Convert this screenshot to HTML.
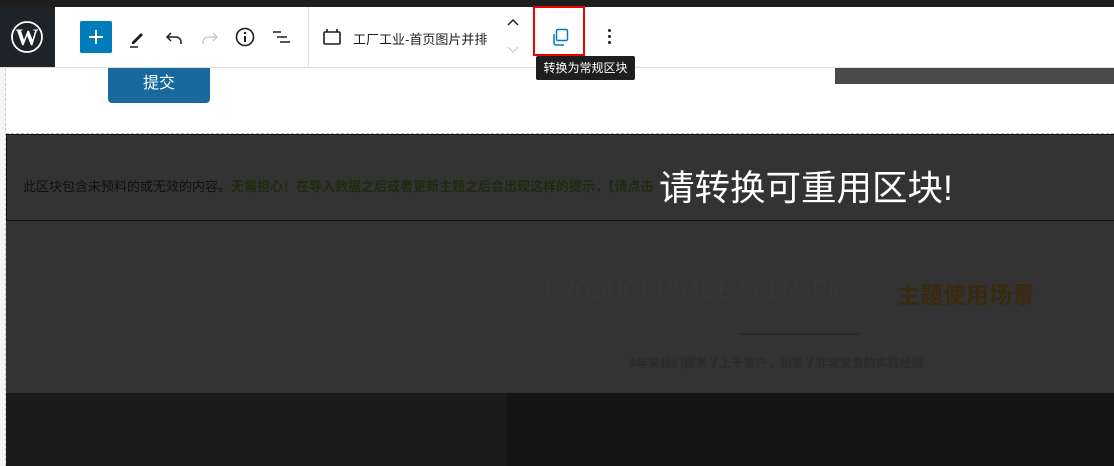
<!DOCTYPE html>
<html><head><meta charset="utf-8"><style>
*{margin:0;padding:0;box-sizing:border-box}
body{width:1114px;height:466px;overflow:hidden;background:#fff;position:relative;font-family:"Liberation Sans","Noto Sans CJK SC",sans-serif}
.a{position:absolute}
</style></head><body>
<div class="a" style="left:0;top:0;width:1114px;height:7px;background:#1e1e1e"></div>
<div class="a" style="left:0;top:7px;width:55px;height:60px;background:#1e2327"></div>
<svg class="a" style="left:10px;top:20px" width="34" height="34" viewBox="0 0 34 34"><circle cx="17" cy="17" r="15" fill="none" stroke="#fff" stroke-width="1.8"/><text x="17" y="25" text-anchor="middle" font-family="Liberation Serif,serif" font-weight="bold" font-size="23" fill="#fff">W</text></svg>
<div class="a" style="left:0;top:67px;width:1114px;height:1px;background:#ddd"></div>
<div class="a" style="left:308px;top:7px;width:1px;height:60px;background:#e0e0e0"></div>
<div class="a" style="left:80px;top:21px;width:32px;height:32px;background:#007cba;border-radius:2px"></div>
<svg class="a" style="left:80px;top:21px" width="32" height="32"><path d="M16 9v14M9 16h14" stroke="#fff" stroke-width="2"/></svg>
<svg class="a" style="left:126px;top:25px" width="24" height="24"><path d="M6 17l9-9 2 2-9 9H6z" fill="#1e1e1e"/><path d="M4 22h8" stroke="#1e1e1e" stroke-width="1.5"/></svg>
<svg class="a" style="left:162px;top:25px" width="24" height="24"><path d="M9 8L5 12l4 4M5 12h9a5 5 0 015 5v2" fill="none" stroke="#1e1e1e" stroke-width="1.5"/></svg>
<svg class="a" style="left:198px;top:25px" width="24" height="24"><path d="M15 8l4 4-4 4M19 12h-9a5 5 0 00-5 5v2" fill="none" stroke="#ccc" stroke-width="1.5"/></svg>
<svg class="a" style="left:233px;top:25px" width="24" height="24"><circle cx="12" cy="12" r="8.5" fill="none" stroke="#1e1e1e" stroke-width="1.6"/><path d="M12 11v6" stroke="#1e1e1e" stroke-width="2"/><circle cx="12" cy="8" r="1.2" fill="#1e1e1e"/></svg>
<svg class="a" style="left:270px;top:25px" width="24" height="24"><path d="M3 7h8M7 12h10M10 17h10" stroke="#1e1e1e" stroke-width="1.6"/></svg>
<svg class="a" style="left:322px;top:27px" width="22" height="20"><rect x="2" y="5" width="16" height="12" rx="1" fill="none" stroke="#1e1e1e" stroke-width="1.6"/><path d="M5 2v3M15 2v3" stroke="#1e1e1e" stroke-width="1.6"/></svg>
<div class="a" style="left:353px;top:29px;font-size:13px;color:#1e1e1e">工厂工业-首页图片并排</div>
<svg class="a" style="left:504px;top:16px" width="18" height="40"><path d="M4 9l5-5 5 5" fill="none" stroke="#1e1e1e" stroke-width="1.5"/><path d="M4 31l5 5 5-5" fill="none" stroke="#ccc" stroke-width="1.2"/></svg>
<div class="a" style="left:533px;top:6px;width:52px;height:50px;border:2px solid #e00"></div>
<svg class="a" style="left:549px;top:26px" width="24" height="24"><rect x="7.5" y="3.5" width="11" height="11" rx="1.5" fill="none" stroke="#007cba" stroke-width="1.5"/><path d="M5 8v9a2 2 0 002 2h8" fill="none" stroke="#007cba" stroke-width="1.5"/></svg>
<div class="a" style="left:536px;top:56px;width:99px;height:24px;background:#1e1e1e;border-radius:2px;color:#fff;font-size:12px;line-height:24px;text-align:center">转换为常规区块</div>
<div class="a" style="left:608px;top:29px;width:3px;height:3px;background:#1e1e1e;border-radius:50%;box-shadow:0 6px 0 #1e1e1e,0 12px 0 #1e1e1e"></div>
<div class="a" style="left:835px;top:68px;width:279px;height:16px;background:#4a4a4a"></div>
<div class="a" style="left:0;top:68px;width:6px;height:398px;background:#f5f5f5;border-right:1px dashed #ccc"></div>
<div class="a" style="left:108px;top:68px;width:102px;height:35px;background:#17699e;border-radius:0 0 4px 4px;color:#fff;font-size:16px;text-align:center;line-height:32px">提交</div>
<div class="a" style="left:6px;top:133px;width:1108px;height:1px;border-top:1px dashed #bbb"></div>
<div class="a" style="left:6px;top:134px;width:1108px;height:260px;background:#333"></div>
<div class="a" style="left:6px;top:134px;width:1108px;height:87px;border:1px solid #111;border-right:none"></div>
<div class="a" style="left:23px;top:176px;font-size:13px;color:#111;white-space:nowrap">此区块包含未预料的或无效的内容。<span style="color:#1f2a0e;font-weight:bold">无需担心！在导入数据之后或者更新主题之后会出现这样的提示，【请点击</span></div>
<div class="a" style="left:655px;top:160px;font-size:35.5px;color:#fff;white-space:nowrap;background:#333;padding-left:4px">请转换可重用区块!</div>
<div class="a" style="left:545px;top:276px;font-size:25px;color:#363636;white-space:nowrap;transform:scaleX(0.86);transform-origin:left">PRODUCT USAGE SCENARIOS</div>
<div class="a" style="left:897px;top:276px;font-size:23px;font-weight:bold;color:#3a2a10;white-space:nowrap">主题使用场景</div>
<div class="a" style="left:739px;top:333px;width:120px;height:2px;background:#2a2a2a"></div>
<div class="a" style="left:629px;top:354px;font-size:12px;font-weight:bold;color:#2b2b2b;white-space:nowrap">8年来我们服务了上千客户，积累了非常宝贵的实践经验</div>
<div class="a" style="left:6px;top:393px;width:500px;height:73px;background:#1b1b1b"></div>
<div class="a" style="left:506px;top:393px;width:608px;height:73px;background:#151515"></div>
</body></html>
